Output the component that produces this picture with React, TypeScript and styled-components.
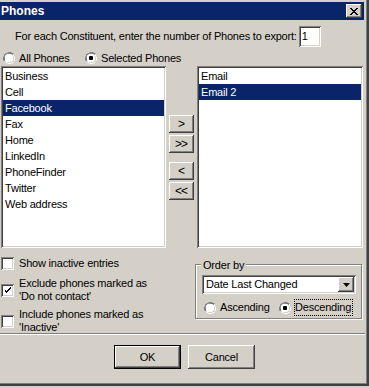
import React from 'react';
import styled, { createGlobalStyle, css } from 'styled-components';

const Global = createGlobalStyle`
  html, body { margin: 0; padding: 0; background: #d4d0c8; }
  body { font-family: "Liberation Sans", Arial, sans-serif; font-size: 11px; letter-spacing: -0.2px; color: #000; }
  * { box-sizing: border-box; }
`;

const raised = css`
  background: #d4d0c8;
  box-shadow: inset -1px -1px #404040, inset 1px 1px #ffffff, inset -2px -2px #808080, inset 2px 2px #d4d0c8;
`;
const sunken = css`
  background: #ffffff;
  box-shadow: inset 1px 1px #808080, inset -1px -1px #ffffff, inset 2px 2px #404040, inset -2px -2px #d4d0c8;
`;

const Window = styled.div`
  width: 369px;
  height: 386px;
  padding: 2px 5px 0 0;
  background: #d4d0c8;
  box-shadow: inset -1px -1px #404040, inset -2px -2px #404040, inset -3px -3px #808080;
  display: flex;
  flex-direction: column;
  overflow: hidden;
`;

const TitleBar = styled.div`
  height: 18px;
  flex: none;
  background: #0a246a;
  display: flex;
  align-items: center;
  justify-content: space-between;
  padding: 0 2px 0 1px;
`;

const Title = styled.span`
  color: #fff;
  font-weight: bold;
  font-size: 12px;
  letter-spacing: 0;
  line-height: 18px;
`;

const CloseButton = styled.div`
  ${raised};
  width: 16px;
  height: 14px;
  display: flex;
  align-items: center;
  justify-content: center;
`;

const Content = styled.div`
  flex: 1;
  display: flex;
  flex-direction: column;
  line-height: 13px;
`;

const PromptRow = styled.div`
  margin-top: 6px;
  height: 21px;
  display: flex;
  align-items: center;
  padding-left: 15px;
  gap: 2px;
`;

const NumberBox = styled.div`
  ${sunken};
  width: 22px;
  height: 21px;
  padding: 4px 0 0 3px;
`;

const RadioRow = styled.div`
  margin-top: 3px;
  height: 16px;
  display: flex;
  align-items: center;
  padding-left: 3px;
`;

const RadioItem = styled.label<{ $w?: number }>`
  display: flex;
  align-items: center;
  gap: 4px;
  width: ${p => (p.$w ? `${p.$w}px` : 'auto')};
`;

const ListsRow = styled.div`
  height: 182px;
  display: flex;
  padding-left: 1px;
  gap: 3px;
`;

const ListBox = styled.div<{ $w: number }>`
  ${sunken};
  width: ${p => p.$w}px;
  height: 100%;
  padding: 2px;
`;

const ListItem = styled.div<{ $sel?: boolean }>`
  height: 16px;
  line-height: 16px;
  padding-left: 2px;
  white-space: nowrap;
  background: ${p => (p.$sel ? '#0a246a' : 'transparent')};
  color: ${p => (p.$sel ? '#fff' : '#000')};
`;

const ArrowColumn = styled.div`
  width: 25px;
  padding-top: 49px;
  display: flex;
  flex-direction: column;
`;

const ArrowButton = styled.div<{ $gap?: number }>`
  ${raised};
  width: 25px;
  height: 18px;
  margin-top: ${p => p.$gap ?? 0}px;
  display: flex;
  align-items: center;
  justify-content: center;
  font-size: 12px;
  letter-spacing: -1px;
  padding-right: 1px;
`;

const BottomArea = styled.div`
  height: 85px;
  display: flex;
`;

const CheckColumn = styled.div`
  width: 195px;
  padding-top: 9px;
  display: flex;
  flex-direction: column;
`;

const CheckItem = styled.label<{ $top: number }>`
  margin-top: ${p => p.$top}px;
  display: flex;
  align-items: center;
  gap: 5px;
  padding-left: 1px;
`;

const CheckBoxBox = styled.span`
  ${sunken};
  width: 13px;
  height: 13px;
  flex: none;
  display: flex;
  align-items: center;
  justify-content: center;
`;

const GroupBox = styled.div`
  position: relative;
  margin-top: 16px;
  width: 167px;
  height: 55px;
  border: 1px solid #808080;
  box-shadow: inset 1px 1px #fff, 1px 1px #fff;
  padding: 10px 0 0 6px;
`;

const Legend = styled.span`
  position: absolute;
  top: -6px;
  left: 5px;
  padding: 0 2px;
  background: #d4d0c8;
`;

const Select = styled.div`
  ${sunken};
  width: 154px;
  height: 19px;
  display: flex;
  align-items: center;
  padding: 2px 2px 2px 4px;
`;

const SelectText = styled.span`
  flex: 1;
`;

const DropButton = styled.div`
  ${raised};
  width: 16px;
  height: 15px;
  display: flex;
  align-items: center;
  justify-content: center;
`;

const OrderRadios = styled.div`
  margin-top: 6px;
  display: flex;
  align-items: center;
  padding-left: 2px;
`;

const Focus = styled.span`
  outline: 1px dotted #000;
  outline-offset: 0px;
  padding: 1px 1px 1px 0;
`;

const Separator = styled.div`
  width: 365px;
  height: 2px;
  border-top: 1px solid #808080;
  border-bottom: 1px solid #ffffff;
`;

const ButtonRow = styled.div`
  padding: 10px 0 0 114px;
  display: flex;
  gap: 7px;
`;

const PushButton = styled.div<{ $default?: boolean }>`
  ${raised};
  width: 67px;
  height: 24px;
  display: flex;
  align-items: center;
  justify-content: center;
  ${p =>
    p.$default &&
    css`
      box-shadow: inset 0 0 0 1px #000, inset -2px -2px #404040, inset 2px 2px #ffffff, inset -3px -3px #808080;
    `}
`;

const Radio: React.FC<{ checked?: boolean }> = ({ checked }) => (
  <svg width="12" height="12" viewBox="0 0 12 12" style={{ flex: 'none' }}>
    <path d="M4 0h4M2 1h2M8 1h2M1 2h1M0 4v4M1 2v2" stroke="#808080" strokeWidth="1" transform="translate(0.5 0.5)" fill="none" />
    <path d="M4 1h4M2 2h2M8 2h1M1 4v4M2 3v1" stroke="#404040" strokeWidth="1" transform="translate(0.5 0.5)" fill="none" />
    <circle cx="6" cy="6" r="4.5" fill="#fff" />
    <path d="M4 11h4M2 10h2M8 10h2M10 8h1M11 4v4M10 2v2" stroke="#fff" strokeWidth="1" transform="translate(0.5 0.5)" fill="none" />
    <path d="M4 10h4M10 4v4M9 8v1M8 9h1" stroke="#d4d0c8" strokeWidth="1" transform="translate(0.5 0.5)" fill="none" />
    <rect x="2" y="2" width="8" height="8" rx="4" fill="#fff" />
    {checked && <rect x="4" y="4" width="4" height="4" rx="1" fill="#000" />}
  </svg>
);

const CheckBox: React.FC<{ checked?: boolean }> = ({ checked }) => (
  <CheckBoxBox>
    {checked && (
      <svg width="7" height="7" viewBox="0 0 7 7">
        <path d="M0 2h1v3h1v1h1v-1h1v-1h1v-1h1v-1h1v-2h-1v1h-1v1h-1v1h-1v1h-1v-1h-1v-1h-1z" fill="#000" />
      </svg>
    )}
  </CheckBoxBox>
);

const leftItems = ['Business', 'Cell', 'Facebook', 'Fax', 'Home', 'LinkedIn', 'PhoneFinder', 'Twitter', 'Web address'];
const rightItems = ['Email', 'Email 2'];

export default function App() {
  return (
    <>
      <Global />
      <Window>
        <TitleBar>
          <Title>Phones</Title>
          <CloseButton>
            <svg width="8" height="7" viewBox="0 0 8 7">
              <path d="M0 0h2v1h1v1h2v-1h1v-1h2v1h-1v1h-1v1h-1v1h1v1h1v1h1v1h-2v-1h-1v-1h-2v1h-1v1h-2v-1h1v-1h1v-1h1v-1h-1v-1h-1v-1h-1z" fill="#000" />
            </svg>
          </CloseButton>
        </TitleBar>
        <Content>
          <PromptRow>
            <span>For each Constituent, enter the number of Phones to export:</span>
            <NumberBox>1</NumberBox>
          </PromptRow>
          <RadioRow>
            <RadioItem $w={82}>
              <Radio />
              <span>All Phones</span>
            </RadioItem>
            <RadioItem>
              <Radio checked />
              <span>Selected Phones</span>
            </RadioItem>
          </RadioRow>
          <ListsRow>
            <ListBox $w={165}>
              {leftItems.map(i => (
                <ListItem key={i} $sel={i === 'Facebook'}>{i}</ListItem>
              ))}
            </ListBox>
            <ArrowColumn>
              <ArrowButton>&gt;</ArrowButton>
              <ArrowButton $gap={2}>&gt;&gt;</ArrowButton>
              <ArrowButton $gap={9}>&lt;</ArrowButton>
              <ArrowButton $gap={2}>&lt;&lt;</ArrowButton>
            </ArrowColumn>
            <ListBox $w={166}>
              {rightItems.map(i => (
                <ListItem key={i} $sel={i === 'Email 2'}>{i}</ListItem>
              ))}
            </ListBox>
          </ListsRow>
          <BottomArea>
            <CheckColumn>
              <CheckItem $top={0}>
                <CheckBox />
                <span>Show inactive entries</span>
              </CheckItem>
              <CheckItem $top={7}>
                <CheckBox checked />
                <span>Exclude phones marked as<br />'Do not contact'</span>
              </CheckItem>
              <CheckItem $top={5}>
                <CheckBox />
                <span>Include phones marked as<br />'Inactive'</span>
              </CheckItem>
            </CheckColumn>
            <GroupBox>
              <Legend>Order by</Legend>
              <Select>
                <SelectText>Date Last Changed</SelectText>
                <DropButton>
                  <svg width="7" height="4" viewBox="0 0 7 4">
                    <path d="M0 0h7l-3.5 4z" fill="#000" />
                  </svg>
                </DropButton>
              </Select>
              <OrderRadios>
                <RadioItem $w={75}>
                  <Radio />
                  <span>Ascending</span>
                </RadioItem>
                <RadioItem>
                  <Radio checked />
                  <Focus>Descending</Focus>
                </RadioItem>
              </OrderRadios>
            </GroupBox>
          </BottomArea>
          <Separator />
          <ButtonRow>
            <PushButton $default>OK</PushButton>
            <PushButton>Cancel</PushButton>
          </ButtonRow>
        </Content>
      </Window>
    </>
  );
}
